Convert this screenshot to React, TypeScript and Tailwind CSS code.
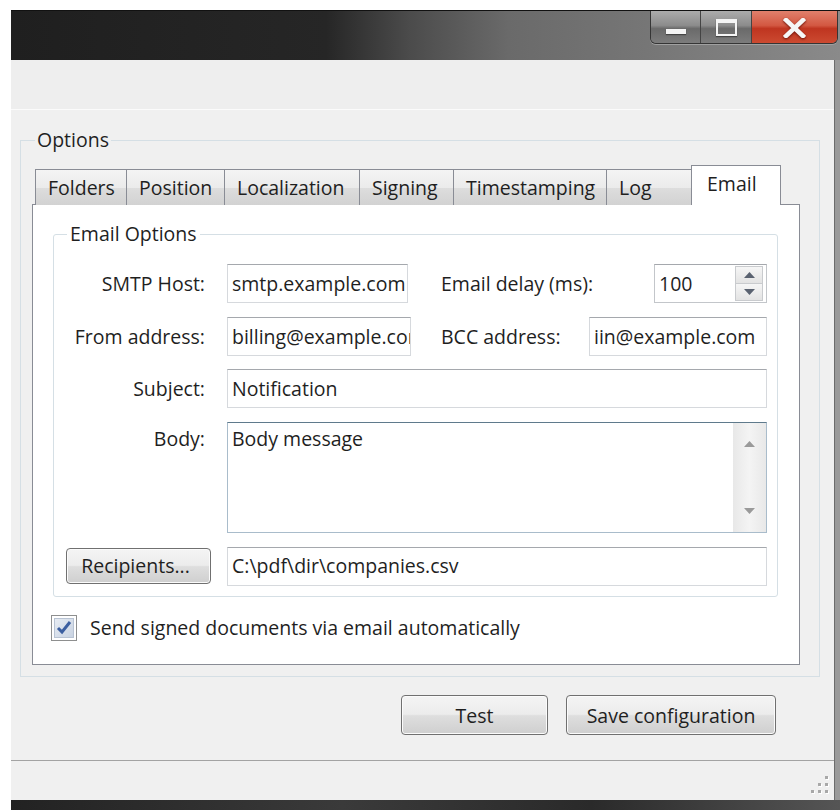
import React from "react";

// Window caption glyphs
function MinGlyph() {
  return <div className="mt-[18px] h-[5px] w-[20px] bg-[#f4f4f4] shadow-[0_1px_1px_#444]" />;
}

function MaxGlyph() {
  return (
    <div className="mt-[8px] h-[17px] w-[21px] border-[2px] border-t-[4px] border-[#f4f4f4] shadow-[0_1px_1px_#444]" />
  );
}

function CloseGlyph() {
  return (
    <svg width="23" height="20" viewBox="0 0 23 20" className="mt-[7px] drop-shadow-[0_1px_1px_#6b1208]">
      <path d="M3 2 L20 18 M20 2 L3 18" stroke="#f6f6f6" strokeWidth="4.5" strokeLinecap="square" />
    </svg>
  );
}

function TitleBar() {
  return (
    <div className="h-[50px] flex justify-end border-t border-[#111] bg-[linear-gradient(90deg,#1f1f1f_0%,#262626_38%,#4b4b4b_48%,#6a6a6a_60%,#777777_78%,#8a8a8a_100%)]">
      <div className="mr-[2px] flex h-[33px] overflow-hidden rounded-b-[6px] border border-t-0 border-[#353535] shadow-[0_1px_0_#a0a0a0]">
        <div className="flex w-[50px] justify-center border-r border-[#444] bg-[linear-gradient(180deg,#acacac_0%,#8c8c8c_45%,#6a6a6a_55%,#7c7c7c_100%)]">
          <MinGlyph />
        </div>
        <div className="flex w-[51px] justify-center border-r border-[#444] bg-[linear-gradient(180deg,#acacac_0%,#8c8c8c_45%,#6a6a6a_55%,#7c7c7c_100%)]">
          <MaxGlyph />
        </div>
        <div className="flex w-[85px] justify-center bg-[linear-gradient(180deg,#e0806c_0%,#d35842_45%,#bf3520_55%,#cc4a31_100%)]">
          <CloseGlyph />
        </div>
      </div>
    </div>
  );
}

function TextBox({ value, className = "" }: { value: string; className?: string }) {
  return (
    <div
      className={`h-[39px] flex items-center overflow-hidden whitespace-nowrap bg-white pl-[4px] border border-[#d6d9dd] border-t-[#a5a8ad] ${className}`}
    >
      {value}
    </div>
  );
}

function WinButton({ label, className = "" }: { label: string; className?: string }) {
  return (
    <button
      className={`rounded-[4px] border border-[#707070] bg-[linear-gradient(180deg,#f4f4f4_0%,#ececec_48%,#dedede_52%,#cfcfcf_100%)] shadow-[inset_0_0_0_1px_#fbfbfb] ${className}`}
    >
      {label}
    </button>
  );
}

function Arrow({ up, color = "#8d8d8d" }: { up?: boolean; color?: string }) {
  return (
    <svg width="11" height="6" viewBox="0 0 11 6">
      <path d={up ? "M0 6 L5.5 0 L11 6 Z" : "M0 0 L5.5 6 L11 0 Z"} fill={color} />
    </svg>
  );
}

function Spinner() {
  return (
    <div className="ml-auto flex h-[39px] w-[113px] items-center border border-[#c3c6ca] border-t-[#a5a8ad] bg-white pl-[4px]">
      <span>100</span>
      <div className="ml-auto mr-[3px] flex h-[35px] w-[28px] flex-col">
        <div className="flex flex-1 items-center justify-center border border-[#c9cbce] bg-[linear-gradient(180deg,#f6f6f6,#e3e3e3)]">
          <Arrow up color="#5a6270" />
        </div>
        <div className="flex flex-1 items-center justify-center border border-t-0 border-[#c9cbce] bg-[linear-gradient(180deg,#f6f6f6,#e3e3e3)]">
          <Arrow color="#5a6270" />
        </div>
      </div>
    </div>
  );
}

const tabs = [
  { label: "Folders", w: "w-[92px]" },
  { label: "Position", w: "w-[99px]" },
  { label: "Localization", w: "w-[136px]" },
  { label: "Signing", w: "w-[95px]" },
  { label: "Timestamping", w: "w-[154px]" },
  { label: "Log", w: "w-[87px]" },
];

function TabStrip() {
  return (
    <div className="relative z-10 -mb-px flex h-[40px] items-end pl-[3px]">
      {tabs.map((t) => (
        <div
          key={t.label}
          className={`${t.w} -mr-px flex h-[36px] items-center border border-b-0 border-[#898c95] bg-[linear-gradient(180deg,#f4f4f4_0%,#ebebeb_50%,#dddddd_51%,#d2d2d2_100%)] pl-[12px]`}
        >
          {t.label}
        </div>
      ))}
      <div className="-ml-[1px] flex h-[40px] w-[90px] items-center border border-b-0 border-[#898c95] bg-white pb-[4px] pl-[15px]">
        Email
      </div>
    </div>
  );
}

function Checkbox() {
  return (
    <div className="flex h-[26px] w-[26px] items-center justify-center border border-[#8e8f8f] bg-white p-[2px]">
      <div className="flex h-full w-full items-center justify-center border border-[#b8c3d3] bg-[linear-gradient(135deg,#e7ecf3,#c9d3e2)]">
        <svg width="16" height="15" viewBox="0 0 16 15">
          <path d="M2 8 L6 12 L14 2" fill="none" stroke="#3c5fa0" strokeWidth="3" />
        </svg>
      </div>
    </div>
  );
}

function EmailOptions() {
  return (
    <fieldset className="ml-[20px] mr-[21px] mt-[16px] rounded-[3px] border border-[#d5dfe5] pb-[11px] pr-[10px]">
      <legend className="ml-[13px] px-[3px] leading-[26px]">Email Options</legend>

      <div className="mt-[17px] flex h-[39px] items-center">
        <div className="w-[151px] text-right">SMTP Host:</div>
        <TextBox value="smtp.example.com" className="ml-[22px] w-[181px]" />
        <div className="ml-[33px]">Email delay (ms):</div>
        <Spinner />
      </div>

      <div className="mt-[14px] flex h-[39px] items-center">
        <div className="w-[151px] text-right">From address:</div>
        <TextBox value="billing@example.com" className="ml-[22px] w-[184px]" />
        <div className="ml-[30px]">BCC address:</div>
        <TextBox value="iin@example.com" className="ml-auto w-[178px]" />
      </div>

      <div className="mt-[13px] flex h-[39px] items-center">
        <div className="w-[151px] text-right">Subject:</div>
        <TextBox value="Notification" className="ml-[22px] flex-1" />
      </div>

      <div className="mt-[14px] flex h-[111px]">
        <div className="w-[151px] pt-[4px] text-right leading-[26px]">Body:</div>
        <div className="ml-[22px] flex flex-1 border border-[#a9bccb] border-t-[#5f7a8c] bg-white">
          <div className="flex-1 pl-[4px] pt-[3px] leading-[26px]">Body message</div>
          <div className="flex w-[33px] flex-col items-center justify-between bg-[linear-gradient(90deg,#e8e8e8,#f4f4f4_50%,#e8e8e8)] py-[18px]">
            <Arrow up color="#9a9a9a" />
            <Arrow color="#9a9a9a" />
          </div>
        </div>
      </div>

      <div className="mt-[14px] flex h-[38px] items-center">
        <WinButton label="Recipients..." className="ml-[12px] h-[36px] w-[145px] pr-[6px]" />
        <TextBox value="C:\pdf\dir\companies.csv" className="ml-[16px] h-[38px] flex-1" />
      </div>
    </fieldset>
  );
}

export default function App() {
  return (
    <div className="flex h-[810px] w-[840px] flex-col overflow-hidden bg-white pl-[11px] pt-[10px] font-['Open_Sans','Noto_Sans',sans-serif] text-[19.5px] text-[#1f1f1f]">
      <TitleBar />

      <div className="flex flex-1">
        <div className="flex flex-1 flex-col bg-[#f0f0f0]">
          {/* toolbar strip */}
          <div className="h-[50px] border-b border-[#fbfbfb] bg-[#eeeeee]" />

          <fieldset className="ml-[9px] mt-[17px] w-[800px] border border-[#d5dfe5] pb-[11px] pl-[11px] pr-[19px] pt-[12px]">
            <legend className="ml-[3px] px-[2px] leading-[26px]">Options</legend>
            <TabStrip />
            <div className="border border-[#898c95] bg-white pb-[22px]">
              <EmailOptions />
              <div className="ml-[18px] mt-[16px] flex items-center">
                <Checkbox />
                <span className="ml-[13px]">Send signed documents via email automatically</span>
              </div>
            </div>
          </fieldset>

          <div className="mt-[18px] flex justify-end gap-[18px] pr-[58px]">
            <WinButton label="Test" className="h-[40px] w-[147px]" />
            <WinButton label="Save configuration" className="h-[40px] w-[210px]" />
          </div>

          {/* status bar with size grip */}
          <div className="mt-[25px] flex flex-1 items-end justify-end border-t border-[#a3a3a3] pb-[6px] pr-[5px]">
            <svg width="20" height="20" viewBox="0 0 20 20">
              {[
                [16, 2],
                [9, 9],
                [16, 9],
                [2, 16],
                [9, 16],
                [16, 16],
              ].map(([x, y]) => (
                <g key={`${x}-${y}`}>
                  <rect x={x + 1} y={y + 1} width="3" height="3" fill="#ffffff" />
                  <rect x={x} y={y} width="3" height="3" fill="#a8a8a8" />
                </g>
              ))}
            </svg>
          </div>
        </div>
        {/* right window frame */}
        <div className="w-[6px] border-l border-[#6c6c6c] bg-[#9a9a9a]" />
      </div>

      <div className="h-[10px] bg-[linear-gradient(90deg,#222222,#3a3a3a_40%,#2a2a2a_70%,#555555)]" />
    </div>
  );
}
